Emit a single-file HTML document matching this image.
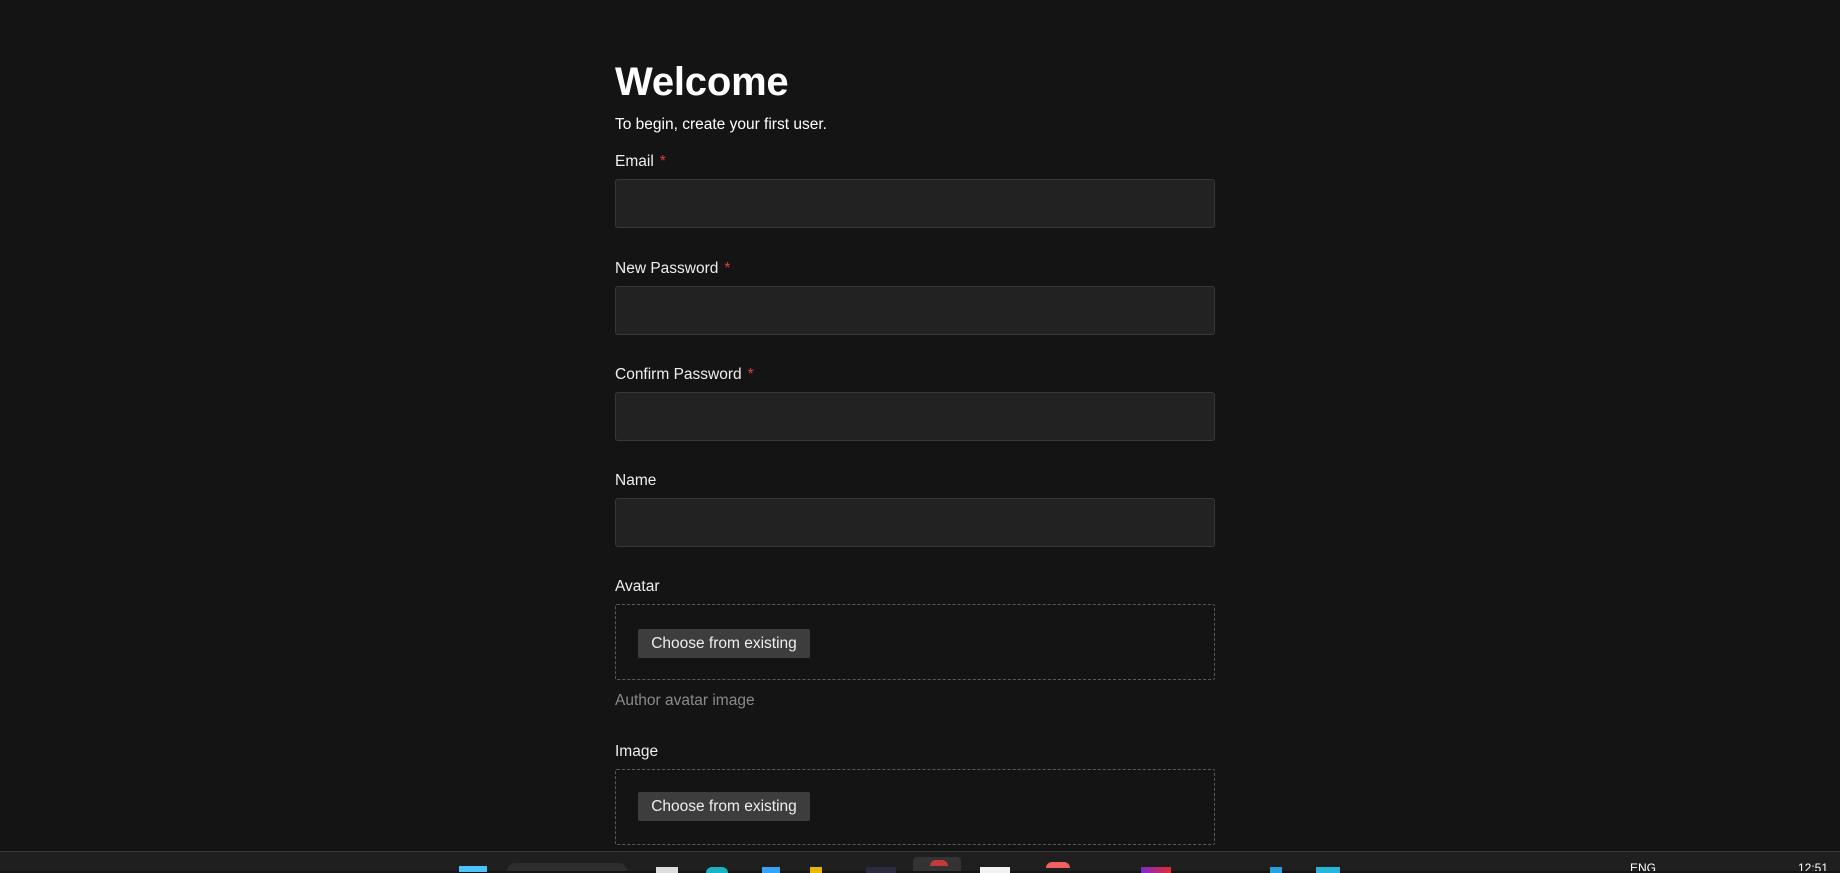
<!DOCTYPE html>
<html><head><meta charset="utf-8"><style>
html,body{margin:0;padding:0;width:1840px;height:870px;overflow:hidden;background:#141414;font-family:"Segoe UI","Liberation Sans",sans-serif;color:#fff}
.a{position:absolute}
h1{position:absolute;left:615px;top:60px;margin:0;font-size:40px;font-weight:700;letter-spacing:-0.2px}
.sub{left:615px;top:116px;font-size:15.5px}
.lbl{left:615px;font-size:15.5px;color:#eee}
.lbl b{color:#d9433a;font-weight:400;margin-left:6px}
.inp{left:615px;width:598px;height:47px;background:#222;border:1px solid #383838;border-radius:3px}
.up{left:615px;width:598px;height:74px;border:1px dashed #5a5a5a;border-radius:2px}
.btn{left:638px;width:172px;height:29px;background:#3d3d3d;border-radius:2px;font-size:15.5px;line-height:29px;text-align:center;color:#eee}
.hint{left:615px;font-size:15.5px;color:#8a8a8a}
.tb{left:0;top:851px;width:1840px;height:19px;background:#1f1f1f;border-top:1px solid #3c3c3c}
.ic{position:absolute;top:15px;height:6px}
</style></head><body>
<h1>Welcome</h1>
<div class="a sub">To begin, create your first user.</div>

<div class="a lbl" style="top:153px">Email<b>*</b></div>
<div class="a inp" style="top:179px"></div>

<div class="a lbl" style="top:260px">New Password<b>*</b></div>
<div class="a inp" style="top:286px"></div>

<div class="a lbl" style="top:366px">Confirm Password<b>*</b></div>
<div class="a inp" style="top:392px"></div>

<div class="a lbl" style="top:472px">Name</div>
<div class="a inp" style="top:498px"></div>

<div class="a lbl" style="top:578px">Avatar</div>
<div class="a up" style="top:604px"></div>
<div class="a btn" style="top:629px">Choose from existing</div>
<div class="a hint" style="top:692px">Author avatar image</div>

<div class="a lbl" style="top:743px">Image</div>
<div class="a up" style="top:769px"></div>
<div class="a btn" style="top:792px">Choose from existing</div>

<div class="a tb">
<div class="ic" style="left:459px;width:28px;background:#4cc2ff;top:14px"></div>
<div class="ic" style="left:507px;width:120px;background:#2d2d2d;border-radius:10px 10px 0 0;top:11px;height:8px"></div>
<div class="ic" style="left:656px;width:22px;background:#ddd"></div>
<div class="ic" style="left:706px;width:22px;background:#1ab3c4;border-radius:10px 10px 0 0"></div>
<div class="ic" style="left:762px;width:18px;background:#36a3f5"></div>
<div class="ic" style="left:810px;width:12px;background:#e6b800"></div>
<div class="ic" style="left:866px;width:30px;background:#2a2a40"></div>
<div class="ic" style="left:913px;width:48px;background:#333;top:5px;height:14px;border-radius:4px 4px 0 0"></div>
<div class="ic" style="left:930px;width:18px;background:#c23a3a;top:8px;border-radius:8px 8px 0 0"></div>
<div class="ic" style="left:980px;width:30px;background:#f2f2f2"></div>
<div class="ic" style="left:1046px;width:24px;background:#f06060;top:10px;border-radius:10px 10px 0 0"></div>
<div class="ic" style="left:1141px;width:30px;background:linear-gradient(90deg,#7a2ad0,#e52b2b)"></div>
<div class="ic" style="left:1270px;width:12px;background:#2aa0e0"></div>
<div class="ic" style="left:1316px;width:24px;background:#24b7d9"></div>
<div class="ic" style="left:1630px;width:30px;background:none;color:#fff;font-size:12px;top:9px;height:10px;overflow:hidden;line-height:14px">ENG</div>
<div class="ic" style="left:1798px;width:40px;background:none;color:#fff;font-size:12px;top:9px;height:10px;overflow:hidden;line-height:14px">12:51</div>
</div>
</body></html>
